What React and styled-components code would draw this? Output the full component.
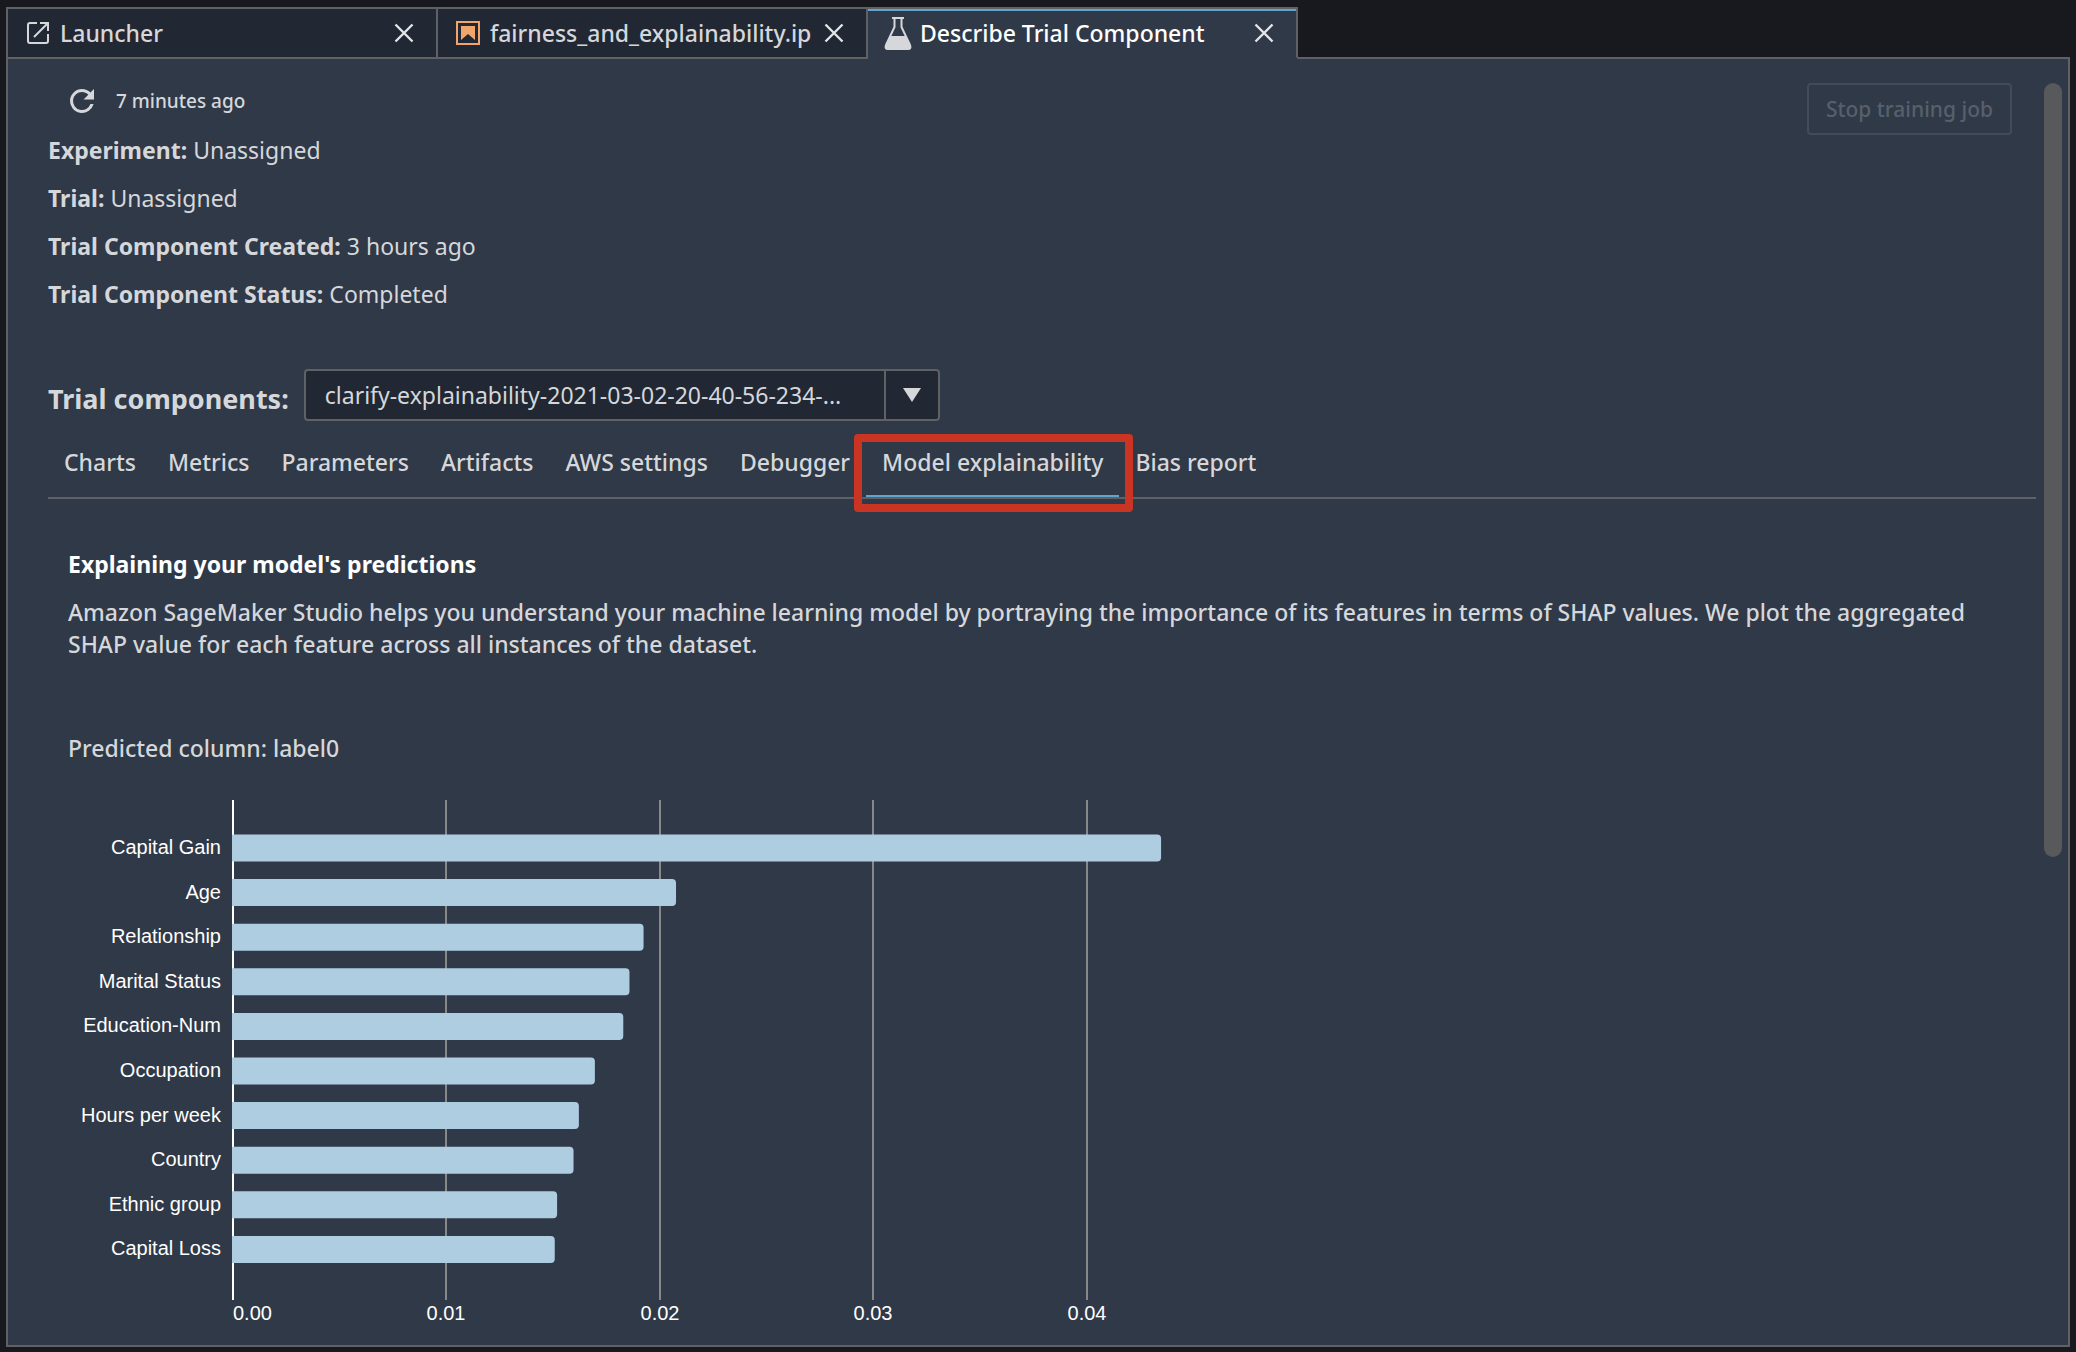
import React, { useState } from "react";
import styled, { createGlobalStyle, css } from "styled-components";

const color = {
  backdrop: "#18191f",
  panel: "#303947",
  inset: "#212833",
  border: "#5f6164",
  text: "#d5d7db",
  bright: "#ffffff",
  accent: "#5fa5ce",
  bar: "#aecde1",
  grid: "#888888",
  mark: "#c93423",
  notebook: "#f0a56c",
};

const GlobalStyle = createGlobalStyle`
  *, *::before, *::after { box-sizing: border-box; }
  body {
    margin: 0;
    background: ${color.backdrop};
    color: ${color.text};
    font-family: "Noto Sans", "Open Sans", sans-serif;
    font-size: 23px;
    line-height: 32px;
  }
  button, select { font: inherit; color: inherit; }
`;

const Window = styled.div`
  display: flex;
  flex-direction: column;
  height: 100vh;
  padding: 7px 6px 5px;
`;

/* Document tabs */

const DocumentTabs = styled.div`
  display: flex;
  flex: none;
  height: 52px;

  &::after {
    content: "";
    flex: 1;
    border-bottom: 2px solid ${color.border};
  }
`;

const DocumentTab = styled.div`
  display: flex;
  align-items: center;
  flex: 0 1 430px;
  min-width: 0;
  padding: 0 22px 0 16px;
  border: 2px solid ${color.border};
  border-left-width: 0;
  background: ${color.inset};

  &:first-child {
    flex-basis: 432px;
    border-left-width: 2px;
  }

  ${(p) =>
    p.$active &&
    css`
      border-bottom-color: ${color.panel};
      background: ${color.panel};
      box-shadow: inset 0 2px ${color.accent};
    `}
`;

const DocumentButton = styled.button`
  display: flex;
  align-items: center;
  flex: 1;
  gap: 8px;
  min-width: 0;
  padding: 0;
  border: 0;
  background: none;
  color: ${(p) => (p.$active ? color.bright : color.text)};
  font-weight: 500;
  line-height: 30px;
  white-space: nowrap;

  svg { flex: none; }
`;

const CloseButton = styled.button`
  display: flex;
  flex: none;
  padding: 0;
  border: 0;
  background: none;
`;

/* Panel */

const Panel = styled.main`
  display: flex;
  flex: 1;
  gap: 8px;
  min-height: 0;
  padding: 24px 6px 0 40px;
  border: 2px solid ${color.border};
  border-top: 0;
  background: ${color.panel};
`;

const Content = styled.div`
  flex: 1;
  min-width: 0;
  overflow: hidden;
`;

const ScrollTrack = styled.div`
  display: grid;
  flex: none;
  grid-template-rows: 27fr 17fr;
  width: 18px;
`;

const ScrollThumb = styled.div`
  border-radius: 9px;
  background: #58595b;
`;

const Header = styled.header`
  display: flex;
  align-items: flex-start;
  justify-content: space-between;
  padding-right: 24px;
`;

const Refreshed = styled.div`
  display: flex;
  align-items: center;
  gap: 16px;
  height: 35px;
  margin-bottom: 8px;
  padding-left: 16px;
  font-size: 19px;
  font-weight: 500;
`;

const IconButton = styled.button`
  display: flex;
  padding: 0;
  border: 0;
  background: none;
`;

const Facts = styled.dl`
  margin: 0;
  line-height: 48px;
`;

const Fact = styled.div`
  display: flex;
  gap: 6px;

  dt { font-weight: 700; }
  dd { margin: 0; }
`;

const StopButton = styled.button`
  height: 52px;
  padding: 0 17px;
  border: 2px solid #424b57;
  border-radius: 4px;
  background: none;
  color: #56606d;
  font-size: 21px;
  font-weight: 500;
`;

const Picker = styled.div`
  display: flex;
  align-items: flex-end;
  gap: 15px;
  margin-top: 51px;
`;

const PickerLabel = styled.label`
  font-size: 27px;
  font-weight: 700;
  line-height: 44px;
`;

const SelectBox = styled.div`
  display: grid;
  grid-template-columns: 1fr 54px;
  width: 636px;
  height: 52px;
  border: 2px solid ${color.border};
  border-radius: 4px;
  background: ${color.inset};
`;

const Select = styled.select`
  grid-area: 1 / 1 / 2 / 3;
  min-width: 0;
  padding: 0 54px 0 19px;
  border: 0;
  appearance: none;
  background: none;
`;

const SelectArrow = styled.span`
  display: grid;
  grid-area: 1 / 2;
  place-items: center;
  border-left: 2px solid ${color.border};
  pointer-events: none;
`;

const SectionTabs = styled.nav`
  display: flex;
  margin-top: 8px;
  border-bottom: 2px solid ${color.border};
`;

const SectionTab = styled.button`
  position: relative;
  height: 68px;
  padding: 0 16px;
  border: 0;
  border-bottom: 2px solid ${(p) => (p.$active ? color.accent : "transparent")};
  background: none;
  font-weight: 500;
  white-space: nowrap;
`;

const Callout = styled.span`
  position: absolute;
  inset: 5px -14px -17px -12px;
  border: 8px solid ${color.mark};
  border-radius: 4px;
  pointer-events: none;
`;

const Report = styled.section`
  padding: 49px 20px 0;
`;

const ReportTitle = styled.h2`
  margin: 0 0 16px;
  color: ${color.bright};
  font-size: 23px;
  font-weight: 700;
`;

const ReportText = styled.p`
  margin: 0;
  font-weight: 500;
`;

const Predicted = styled.p`
  margin: 72px 0 36px;
  font-weight: 500;
`;

const Chart = styled.svg`
  display: block;
  font-family: "Liberation Sans", Arial, sans-serif;
  font-size: 20px;
  fill: ${color.bright};
`;

const LauncherIcon = () => (
  <svg width="28" height="28" viewBox="0 0 28 28" fill="none" stroke={color.text} strokeWidth="2">
    <path d="M13 4H6Q4 4 4 6V22Q4 24 6 24H22Q24 24 24 22V15" />
    <path d="M16 4H24V12M24 4L10 18" />
  </svg>
);

const NotebookIcon = () => (
  <svg width="28" height="28" viewBox="0 0 28 28" fill="none">
    <rect x="3" y="3" width="22" height="22" stroke={color.notebook} strokeWidth="2" />
    <path d="M7 7H21V21L14 15L7 21Z" fill={color.notebook} />
  </svg>
);

const FlaskIcon = () => (
  <svg width="28" height="34" viewBox="0 0 28 34" fill="none">
    <path d="M8 2H20" stroke={color.text} strokeWidth="2" />
    <path d="M10.5 2V11L2 29Q0.5 33 4 33H24Q27.5 33 26 29L17.5 11V2" stroke={color.text} strokeWidth="2" />
    <path d="M6 20H22L26 29Q27.5 33 24 33H4Q0.5 33 2 29Z" fill={color.text} />
  </svg>
);

const CloseIcon = () => (
  <svg width="20" height="20" viewBox="0 0 20 20" stroke="#e4e5e8" strokeWidth="2.4">
    <path d="M1.5 1.5L18.5 18.5M18.5 1.5L1.5 18.5" />
  </svg>
);

const RefreshIcon = () => (
  <svg width="36" height="36" viewBox="0 0 24 24" fill={color.text}>
    <path d="M17.65 6.35A7.96 7.96 0 0 0 12 4a8 8 0 1 0 7.73 10h-2.08A6 6 0 1 1 12 6c1.66 0 3.14.69 4.22 1.78L13 11h7V4l-2.35 2.35z" />
  </svg>
);

const documents = [
  { name: "Launcher", icon: LauncherIcon },
  { name: "fairness_and_explainability.ip", icon: NotebookIcon },
  { name: "Describe Trial Component", icon: FlaskIcon },
];

const facts = [
  ["Experiment:", "Unassigned"],
  ["Trial:", "Unassigned"],
  ["Trial Component Created:", "3 hours ago"],
  ["Trial Component Status:", "Completed"],
];

const sections = [
  "Charts",
  "Metrics",
  "Parameters",
  "Artifacts",
  "AWS settings",
  "Debugger",
  "Model explainability",
  "Bias report",
];

const shapValues = [
  ["Capital Gain", 0.04347],
  ["Age", 0.02075],
  ["Relationship", 0.01923],
  ["Marital Status", 0.01857],
  ["Education-Num", 0.01828],
  ["Occupation", 0.01695],
  ["Hours per week", 0.0162],
  ["Country", 0.01595],
  ["Ethnic group", 0.01518],
  ["Capital Loss", 0.01507],
];

const ticks = [0, 0.01, 0.02, 0.03, 0.04];

const plot = { left: 165, height: 500, unit: 21350, first: 48, pitch: 44.6, bar: 27, radius: 4 };

const barPath = (value, row) => {
  const x = plot.left - 1;
  const y = plot.first + row * plot.pitch - plot.bar / 2;
  const end = plot.left + value * plot.unit;
  const r = plot.radius;
  return `M${x} ${y}H${end - r}q${r} 0 ${r} ${r}v${plot.bar - 2 * r}q0 ${r} ${-r} ${r}H${x}Z`;
};

function ShapChart() {
  return (
    <Chart width="1120" height="532" role="img" aria-label="SHAP values by feature">
      {ticks.map((tick, i) => {
        const x = Math.floor(plot.left + tick * plot.unit);
        return (
          <g key={tick}>
            <line x1={x} x2={x} y1="0" y2={plot.height} stroke={i ? color.grid : color.bright} strokeWidth="2" />
            <text x={x} y="520" textAnchor={i ? "middle" : "start"}>
              {tick.toFixed(2)}
            </text>
          </g>
        );
      })}
      {shapValues.map(([name, value], row) => (
        <g key={name}>
          <path d={barPath(value, row)} fill={color.bar} />
          <text x={plot.left - 12} y={Math.round(plot.first + row * plot.pitch + 6)} textAnchor="end">
            {name}
          </text>
        </g>
      ))}
    </Chart>
  );
}

export default function App() {
  const [openDocument, setOpenDocument] = useState("Describe Trial Component");
  const [section, setSection] = useState("Model explainability");

  return (
    <Window>
      <GlobalStyle />
      <DocumentTabs>
        {documents.map(({ name, icon: Icon }) => (
          <DocumentTab key={name} $active={name === openDocument}>
            <DocumentButton $active={name === openDocument} onClick={() => setOpenDocument(name)}>
              <Icon />
              {name}
            </DocumentButton>
            <CloseButton aria-label={`Close ${name}`}>
              <CloseIcon />
            </CloseButton>
          </DocumentTab>
        ))}
      </DocumentTabs>

      <Panel>
        <Content>
          <Header>
            <div>
              <Refreshed>
                <IconButton aria-label="Refresh">
                  <RefreshIcon />
                </IconButton>
                7 minutes ago
              </Refreshed>
              <Facts>
                {facts.map(([term, value]) => (
                  <Fact key={term}>
                    <dt>{term}</dt>
                    <dd>{value}</dd>
                  </Fact>
                ))}
              </Facts>
            </div>
            <StopButton disabled>Stop training job</StopButton>
          </Header>

          <Picker>
            <PickerLabel htmlFor="trial-component">Trial components:</PickerLabel>
            <SelectBox>
              <Select id="trial-component">
                <option>clarify-explainability-2021-03-02-20-40-56-234-...</option>
              </Select>
              <SelectArrow>
                <svg width="18" height="14" viewBox="0 0 18 14" fill={color.text}>
                  <path d="M0 0H18L9 14Z" />
                </svg>
              </SelectArrow>
            </SelectBox>
          </Picker>

          <SectionTabs>
            {sections.map((name) => (
              <SectionTab key={name} $active={name === section} onClick={() => setSection(name)}>
                {name}
                {name === "Model explainability" && <Callout />}
              </SectionTab>
            ))}
          </SectionTabs>

          <Report>
            <ReportTitle>Explaining your model's predictions</ReportTitle>
            <ReportText>
              Amazon SageMaker Studio helps you understand your machine learning model by portraying the importance of
              its features in terms of SHAP values. We plot the aggregated SHAP value for each feature across all
              instances of the dataset.
            </ReportText>
            <Predicted>Predicted column: label0</Predicted>
            <ShapChart />
          </Report>
        </Content>
        <ScrollTrack>
          <ScrollThumb />
        </ScrollTrack>
      </Panel>
    </Window>
  );
}
